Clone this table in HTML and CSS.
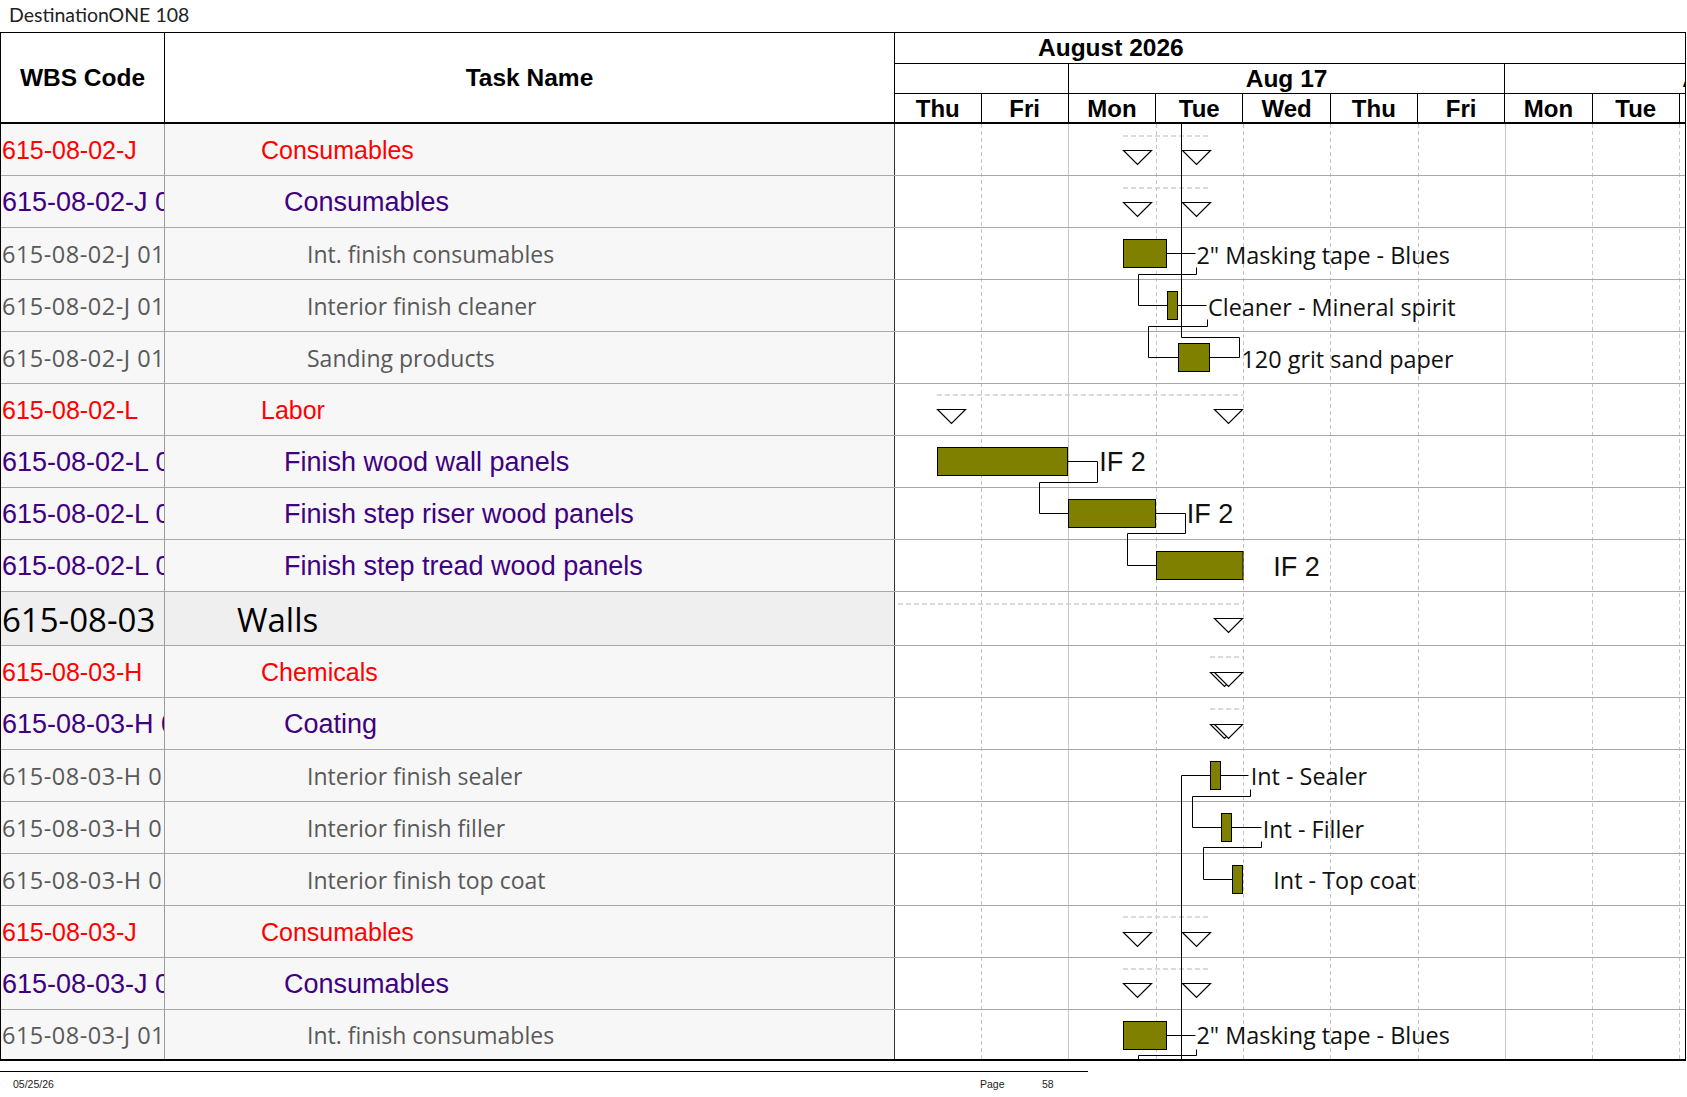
FILE: index.html
```html
<!DOCTYPE html>
<html>
<head>
<meta charset="utf-8">
<title>DestinationONE 108</title>
<link rel="stylesheet" href="styles.css">
</head>
<body>
<div class="title">DestinationONE 108</div>
<div class="sheet">
  <div class="hdr">
    <div class="hdr-wbs">WBS Code</div>
    <div class="hdr-task">Task Name</div>
    <div class="hdr-gantt">
      <div class="month">August 2026</div>
      <div class="weeks">
        <div class="wk wk0"></div>
        <div class="wk wk1">Aug 17</div>
        <div class="wk wk2">Aug 24</div>
      </div>
      <div class="days">
        <div class="day first">Thu</div>
        <div class="day">Fri</div>
        <div class="day">Mon</div>
        <div class="day">Tue</div>
        <div class="day">Wed</div>
        <div class="day">Thu</div>
        <div class="day">Fri</div>
        <div class="day">Mon</div>
        <div class="day">Tue</div>
        <div class="day"></div>
      </div>
    </div>
  </div>
  <div class="body">
    <div class="rows">
      <div class="row l1"><div class="wbs">615-08-02-J</div><div class="task">Consumables</div></div>
      <div class="row l2"><div class="wbs">615-08-02-J 01</div><div class="task">Consumables</div></div>
      <div class="row l3"><div class="wbs">615-08-02-J 01.01</div><div class="task">Int. finish consumables</div></div>
      <div class="row l3"><div class="wbs">615-08-02-J 01.02</div><div class="task">Interior finish cleaner</div></div>
      <div class="row l3"><div class="wbs">615-08-02-J 01.03</div><div class="task">Sanding products</div></div>
      <div class="row l1"><div class="wbs">615-08-02-L</div><div class="task">Labor</div></div>
      <div class="row l2"><div class="wbs">615-08-02-L 01</div><div class="task">Finish wood wall panels</div></div>
      <div class="row l2"><div class="wbs">615-08-02-L 02</div><div class="task">Finish step riser wood panels</div></div>
      <div class="row l2"><div class="wbs">615-08-02-L 03</div><div class="task">Finish step tread wood panels</div></div>
      <div class="row l0"><div class="wbs">615-08-03</div><div class="task">Walls</div></div>
      <div class="row l1"><div class="wbs">615-08-03-H</div><div class="task">Chemicals</div></div>
      <div class="row l2"><div class="wbs">615-08-03-H 01</div><div class="task">Coating</div></div>
      <div class="row l3"><div class="wbs">615-08-03-H 01.01</div><div class="task">Interior finish sealer</div></div>
      <div class="row l3"><div class="wbs">615-08-03-H 01.02</div><div class="task">Interior finish filler</div></div>
      <div class="row l3"><div class="wbs">615-08-03-H 01.03</div><div class="task">Interior finish top coat</div></div>
      <div class="row l1"><div class="wbs">615-08-03-J</div><div class="task">Consumables</div></div>
      <div class="row l2"><div class="wbs">615-08-03-J 01</div><div class="task">Consumables</div></div>
      <div class="row l3 last-row"><div class="wbs">615-08-03-J 01.01</div><div class="task">Int. finish consumables</div></div>
    </div>
    <svg class="chart" width="790" height="935" viewBox="0 0 790 935" xmlns="http://www.w3.org/2000/svg">
      <g class="vdash">
        <line x1="86.5" y1="0" x2="86.5" y2="935"/>
        <line x1="261.5" y1="0" x2="261.5" y2="935"/>
        <line x1="348.5" y1="0" x2="348.5" y2="935"/>
        <line x1="435.5" y1="0" x2="435.5" y2="935"/>
        <line x1="523.5" y1="0" x2="523.5" y2="935"/>
        <line x1="697.5" y1="0" x2="697.5" y2="935"/>
        <line x1="784.5" y1="0" x2="784.5" y2="935"/>
      </g>
      <g class="vsolid">
        <line x1="173.5" y1="0" x2="173.5" y2="935"/>
        <line x1="610.5" y1="0" x2="610.5" y2="935"/>
      </g>
      <g class="hline">
        <line x1="0" y1="51.5" x2="790" y2="51.5"/>
        <line x1="0" y1="103.5" x2="790" y2="103.5"/>
        <line x1="0" y1="155.5" x2="790" y2="155.5"/>
        <line x1="0" y1="207.5" x2="790" y2="207.5"/>
        <line x1="0" y1="259.5" x2="790" y2="259.5"/>
        <line x1="0" y1="311.5" x2="790" y2="311.5"/>
        <line x1="0" y1="363.5" x2="790" y2="363.5"/>
        <line x1="0" y1="415.5" x2="790" y2="415.5"/>
        <line x1="0" y1="467.5" x2="790" y2="467.5"/>
        <line x1="0" y1="521.5" x2="790" y2="521.5"/>
        <line x1="0" y1="573.5" x2="790" y2="573.5"/>
        <line x1="0" y1="625.5" x2="790" y2="625.5"/>
        <line x1="0" y1="677.5" x2="790" y2="677.5"/>
        <line x1="0" y1="729.5" x2="790" y2="729.5"/>
        <line x1="0" y1="781.5" x2="790" y2="781.5"/>
        <line x1="0" y1="833.5" x2="790" y2="833.5"/>
        <line x1="0" y1="885.5" x2="790" y2="885.5"/>
      </g>
      <g class="sumline">
        <line x1="228" y1="12" x2="315" y2="12"/>
        <line x1="228" y1="64" x2="315" y2="64"/>
        <line x1="42" y1="271" x2="348" y2="271"/>
        <line x1="3" y1="480" x2="348" y2="480"/>
        <line x1="315" y1="533" x2="348" y2="533"/>
        <line x1="315" y1="585" x2="348" y2="585"/>
        <line x1="228" y1="793" x2="315" y2="793"/>
        <line x1="228" y1="845" x2="315" y2="845"/>
      </g>
      <g class="tri">
        <polygon points="228.5,26.5 256.5,26.5 242.5,40.5"/>
        <polygon points="287.5,26.5 315.5,26.5 301.5,40.5"/>
        <polygon points="228.5,78.5 256.5,78.5 242.5,92.5"/>
        <polygon points="287.5,78.5 315.5,78.5 301.5,92.5"/>
        <polygon points="42.5,285.5 70.5,285.5 56.5,299.5"/>
        <polygon points="319.5,285.5 347.5,285.5 333.5,299.5"/>
        <polygon points="319.5,494.5 347.5,494.5 333.5,508.5"/>
        <polygon points="315.5,548.5 343.5,548.5 329.5,562.5"/>
        <polygon points="319.5,548.5 347.5,548.5 333.5,562.5"/>
        <polygon points="315.5,600.5 343.5,600.5 329.5,614.5"/>
        <polygon points="319.5,600.5 347.5,600.5 333.5,614.5"/>
        <polygon points="228.5,808.5 256.5,808.5 242.5,822.5"/>
        <polygon points="287.5,808.5 315.5,808.5 301.5,822.5"/>
        <polygon points="228.5,859.5 256.5,859.5 242.5,873.5"/>
        <polygon points="287.5,859.5 315.5,859.5 301.5,873.5"/>
      </g>
      <g class="link">
        <path d="M286.5,0 V213.5 H344.5 V233.5 H314.5"/>
        <path d="M286.5,935 V651.5 H315.5"/>
        <path d="M271.5,129.5 H300.5"/>
        <path d="M301.5,143.5 V150.5 H243.5 V181.5 H272.5"/>
        <path d="M282.5,181.5 H311.5"/>
        <path d="M312.5,195.5 V202.5 H253.5 V233.5 H283.5"/>
        <path d="M172.5,337.5 H202.5 V358.5 H144.5 V389.5 H173.5"/>
        <path d="M260.5,389.5 H290.5"/>
        <path d="M290.5,389.5 V409.5 H232.5 V441.5 H261.5"/>
        <path d="M325.5,651.5 H353.5"/>
        <path d="M355.5,665.5 V672.5 H297.5 V703.5 H326.5"/>
        <path d="M336.5,703.5 H366.5"/>
        <path d="M366.5,717.5 V723.5 H308.5 V755.5 H337.5"/>
        <path d="M271.5,911.5 H300.5"/>
        <path d="M301.5,925.5 V931.5 H243.5 V935"/>
      </g>
      <g class="bar">
        <rect x="228.5" y="115.5" width="43" height="28"/>
        <rect x="272.5" y="167.5" width="10" height="28"/>
        <rect x="283.5" y="219.5" width="31" height="28"/>
        <rect x="42.5" y="323.5" width="130" height="28"/>
        <rect x="173.5" y="375.5" width="87" height="28"/>
        <rect x="261.5" y="427.5" width="86.5" height="28"/>
        <rect x="315.5" y="637.5" width="10" height="28"/>
        <rect x="326.5" y="689.5" width="10" height="28"/>
        <rect x="337.5" y="741.5" width="10" height="28"/>
        <rect x="228.5" y="897.5" width="43" height="28"/>
      </g>
      <g class="lbl">
        <text x="301.5" y="139.7">2" Masking tape - Blues</text>
        <text x="313" y="192">Cleaner - Mineral spirit</text>
        <text x="346.5" y="243.7">120 grit sand paper</text>
        <text x="355.7" y="661.3">Int - Sealer</text>
        <text x="367.7" y="713.7">Int - Filler</text>
        <text x="378.3" y="765.3">Int - Top coat</text>
        <text x="301.5" y="920.3">2" Masking tape - Blues</text>
      </g>
      <g class="lbl-arial">
        <text x="204.3" y="347">IF 2</text>
        <text x="291.7" y="399.3">IF 2</text>
        <text x="378.3" y="452">IF 2</text>
      </g>
    </svg>
  </div>
</div>
<div class="footer">
  <span class="date">05/25/26</span>
  <span class="pg">Page</span>
  <span class="num">58</span>
</div>
</body>
</html>
```

FILE: styles.css
```css
html, body {
  margin: 0;
  padding: 0;
  background: #ffffff;
}
body {
  width: 1687px;
  height: 1097px;
  overflow: hidden;
  font-family: "Liberation Sans", Arial, sans-serif;
  color: #000;
}
.title {
  height: 32px;
  line-height: 30px;
  padding-left: 9px;
  font-family: Lato, "Liberation Sans", sans-serif;
  font-size: 19.5px;
  color: #222;
  white-space: nowrap;
}
.sheet {
  width: 1684px;
  border: 1px solid #000;
  border-bottom-width: 2px;
}
.hdr {
  display: flex;
  height: 89px;
  border-bottom: 2px solid #000;
}
.hdr-wbs,
.hdr-task {
  display: flex;
  align-items: center;
  justify-content: center;
  font-weight: bold;
  font-size: 24.5px;
  border-right: 1px solid #000;
}
.hdr-wbs { width: 163px; }
.hdr-task { width: 729px; }
.hdr-gantt {
  width: 790px;
  overflow: hidden;
  display: flex;
  flex-direction: column;
}
.month {
  height: 30px;
  line-height: 30px;
  border-bottom: 1px solid #000;
  padding-left: 143px;
  font-weight: bold;
  font-size: 24.5px;
  white-space: nowrap;
}
.weeks {
  height: 29px;
  border-bottom: 1px solid #000;
  display: flex;
}
.wk {
  flex: none;
  box-sizing: border-box;
  border-right: 1px solid #000;
  text-align: center;
  line-height: 30px;
  font-weight: bold;
  font-size: 24.5px;
  white-space: nowrap;
}
.wk0 { width: 173.8px; }
.wk1, .wk2 { width: 436.5px; }
.days {
  height: 28px;
  display: flex;
}
.day {
  flex: none;
  width: 87.3px;
  box-sizing: border-box;
  border-right: 1px solid #000;
  text-align: center;
  line-height: 29px;
  font-weight: bold;
  font-size: 24px;
  white-space: nowrap;
}
.day.first { width: 86.5px; }

.body {
  display: flex;
}
.rows {
  width: 894px;
  display: flex;
  flex-direction: column;
}
.row {
  display: flex;
  height: 52px;
  box-sizing: border-box;
  border-bottom: 1px solid #a8a8a8;
  background: #f7f7f7;
  white-space: nowrap;
}
.wbs,
.task {
  box-sizing: border-box;
  overflow: hidden;
  padding-top: 2px;
  line-height: 49px;
}
.wbs {
  width: 164px;
  border-right: 1px solid #9c9c9c;
  padding-left: 1px;
}
.task {
  width: 730px;
  border-right: 1px solid #333;
}
.row.last-row {
  height: 49px;
  border-bottom: none;
}
.last-row .wbs,
.last-row .task {
  line-height: 47px;
}
.l1 {
  color: #ff0000;
  font-size: 25px;
}
.l1 .task { padding-left: 96px; }
.l2 {
  color: #400080;
  font-size: 27px;
}
.l2 .task { padding-left: 119px; }
.l3 {
  color: #595959;
  font-family: "Open Sans", "Noto Sans", sans-serif;
  font-size: 23px;
}
.l3 .wbs {
  font-size: 23.5px;
  letter-spacing: 0.5px;
}
.l3 .task { padding-left: 142px; }
.l0 {
  height: 54px;
  background: #efefef;
  color: #000;
  font-family: "Open Sans", "Noto Sans", sans-serif;
  font-size: 33px;
}
.l0 .wbs,
.l0 .task {
  line-height: 51px;
}
.l0 .task { padding-left: 72px; }

.chart {
  display: block;
  flex: none;
  background: #fff;
}
.vdash line {
  stroke: #c4c4c4;
  stroke-width: 1;
  stroke-dasharray: 4 3;
}
.vsolid line {
  stroke: #c8c8c8;
  stroke-width: 1;
}
.hline line {
  stroke: #a8a8a8;
  stroke-width: 1;
}
.sumline line {
  stroke: #cfcfcf;
  stroke-width: 1.5;
  stroke-dasharray: 5 3;
}
.tri polygon {
  fill: #fff;
  stroke: #000;
  stroke-width: 1.2;
}
.link path {
  fill: none;
  stroke: #000;
  stroke-width: 1;
}
.bar rect {
  fill: #808000;
  stroke: #000;
  stroke-width: 1;
}
.lbl text {
  font-family: "Open Sans", "Noto Sans", sans-serif;
  font-size: 23.4px;
  fill: #111;
}
.lbl-arial text {
  font-family: "Liberation Sans", Arial, sans-serif;
  font-size: 27px;
  fill: #111;
}

.footer {
  width: 1075px;
  margin-top: 10px;
  border-top: 1px solid #000;
  padding-top: 5px;
  padding-left: 13px;
  display: flex;
  font-family: "Liberation Sans", Arial, sans-serif;
  font-size: 10.5px;
  line-height: 14px;
  color: #222;
}
.date { width: 967px; }
.pg { width: 62px; }
```
